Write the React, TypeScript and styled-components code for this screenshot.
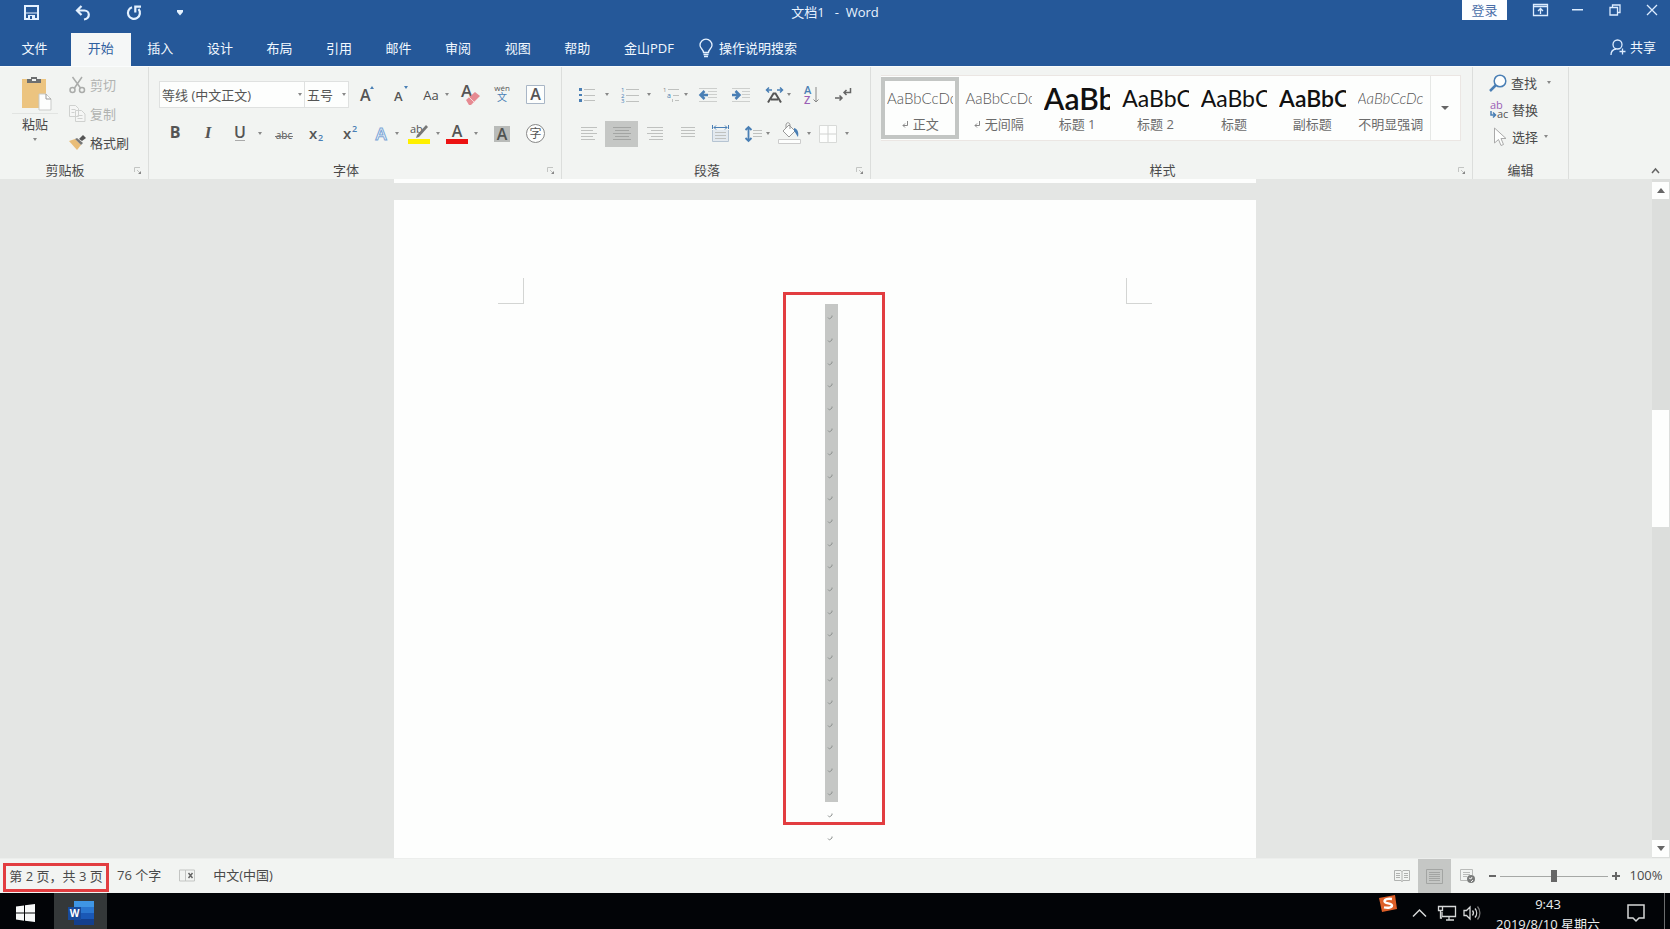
import React, { useState } from "react";
import styled, { createGlobalStyle, css } from "styled-components";

const Global = createGlobalStyle`
  * { box-sizing: border-box; }
  html, body, #root { height: 100%; }
  body {
    margin: 0;
    overflow: hidden;
    font-family: "Open Sans", "Noto Sans CJK SC", sans-serif;
    font-size: 13px;
    line-height: 20px;
    color: #4a4a4a;
  }
  button, input, select { font: inherit; color: inherit; }
  svg { overflow: visible; }
`;

const Bare = styled.button`
  border: 0;
  padding: 0;
  background: none;
  display: flex;
  align-items: center;
  justify-content: center;
  white-space: nowrap;
`;

const Window = styled.div`
  height: 100vh;
  display: flex;
  flex-direction: column;
  background: #e4e6e4;
`;

/* Title bar and tabs */

const TitleBar = styled.header`
  flex: none;
  height: 33px;
  display: grid;
  grid-template-columns: 1fr auto 1fr;
  background: #255899;
  color: #e9f3ff;
`;

const QuickAccess = styled.div`
  display: flex;
  align-items: center;
  height: 25px;
  padding-left: 6px;
`;

const QuickButton = styled(Bare)<{ $narrow?: boolean }>`
  width: ${(p) => (p.$narrow ? 42 : 51)}px;
  height: 25px;
`;

const DocTitle = styled.div`
  white-space: pre;
  line-height: 24px;
`;

const WindowControls = styled.div`
  display: flex;
  justify-content: flex-end;
  align-items: flex-start;
  height: 20px;
`;

const SignIn = styled(Bare)`
  width: 45px;
  height: 20px;
  margin-right: 15px;
  background: #fdfeff;
  color: #4a6ea8;
`;

const ControlButton = styled(Bare)`
  width: 37px;
  height: 20px;
`;

const TabBar = styled.nav`
  flex: none;
  height: 33px;
  display: flex;
  background: #255899;
  color: #f2f8ff;
`;

const FileTab = styled(Bare)`
  width: 71px;
  padding: 0 2px 3px 0;
`;

const Tabs = styled.div`
  width: 536px;
  display: grid;
  grid-template-columns: repeat(9, 1fr);
`;

const Tab = styled(Bare)<{ $active?: boolean }>`
  padding-bottom: 3px;
  ${(p) => p.$active && css`background: #f5f7f7; color: #2f5f9f;`}
`;

const PdfTab = styled(Bare)`
  width: 84px;
  padding-bottom: 3px;
`;

const TellMe = styled(Bare)`
  gap: 6px;
  margin-left: 8px;
  padding-bottom: 3px;
`;

const Share = styled(Bare)`
  gap: 4px;
  margin-left: auto;
  margin-right: 14px;
  height: 28px;
`;

/* Ribbon */

const Ribbon = styled.div`
  flex: none;
  height: 113px;
  display: flex;
  background: #f2f4f2;
  border-top: 1px solid #fafcfc;
`;

const Group = styled.section<{ $w?: number }>`
  ${(p) => (p.$w ? css`flex: none; width: ${p.$w}px;` : css`flex: 1; min-width: 0;`)}
  display: flex;
  flex-direction: column;
  border-right: 1px solid #dcdedc;
`;

const GroupBody = styled.div`
  flex: 1;
  min-height: 0;
  padding-left: 10px;
`;

const GroupFoot = styled.div`
  height: 18px;
  display: flex;
  align-items: center;
`;

const GroupLabel = styled.div`
  flex: 1;
  text-align: center;
  line-height: 18px;
`;

const Launcher = styled(Bare)`
  width: 8px;
  height: 8px;
  margin: 2px 6px 0 4px;
`;

const ToolRow = styled.div<{ $first?: boolean }>`
  display: flex;
  align-items: center;
  height: 27px;
  margin-top: ${(p) => (p.$first ? 14 : 12)}px;
`;

const Tool = styled(Bare)<{ $w: number; $gap?: number; $on?: boolean }>`
  flex: none;
  width: ${(p) => p.$w}px;
  height: 26px;
  gap: ${(p) => p.$gap ?? 4}px;
  ${(p) => p.$on && css`background: #c5c7c5;`}
`;

const ArrowGlyph = styled.svg`
  flex: none;
`;

const Arrow = () => (
  <ArrowGlyph width="4" height="3" viewBox="0 0 4 3"><path d="M0 0h4L2 3z" fill="#888" /></ArrowGlyph>
);

const Combo = styled.div<{ $w: number }>`
  width: ${(p) => p.$w}px;
  height: 27px;
  border: 1px solid #dfe1e0;
  background: #fdfefd;
  display: flex;
  align-items: center;
  padding-right: 2px;
  & + & { border-left: 0; }
`;

const ComboSelect = styled.select`
  appearance: none;
  flex: 1;
  min-width: 0;
  height: 25px;
  border: 0;
  padding: 0 0 0 2px;
  background: none;
  color: #555;
`;

/* Clipboard */

const Clipboard = styled.div`
  display: flex;
  height: 100%;
`;

const Paste = styled(Bare)`
  width: 50px;
  flex-direction: column;
  justify-content: flex-start;
  padding-top: 9px;
`;

const PasteRule = styled.div`
  width: 46px;
  height: 1px;
  margin-top: 3px;
  background: #e2e4e2;
`;

const PasteLabel = styled.span`
  margin-bottom: 4px;
`;

const ClipList = styled.div`
  display: flex;
  flex-direction: column;
  padding-top: 3px;
  margin-left: 9px;
`;

const ClipItem = styled(Bare)<{ $off?: boolean }>`
  height: 29px;
  gap: 4px;
  justify-content: flex-start;
  color: ${(p) => (p.$off ? "#b1b3b1" : "#4a4a4a")};
`;

/* Styles gallery */

const Gallery = styled.div`
  display: flex;
  height: 66px;
  margin: 8px 11px 0 0;
  background: #fdfefd;
  border: 1px solid #ebe6e3;
  border-left: 0;
`;

const StyleCard = styled(Bare)<{ $on?: boolean }>`
  flex: 1;
  min-width: 0;
  height: 62px;
  margin-top: 1px;
  flex-direction: column;
  justify-content: flex-start;
  padding: 4px 2px 0;
  border: 4px solid ${(p) => (p.$on ? "#c3c6c4" : "transparent")};
`;

const Preview = styled.span<{ $size: number; $weight: number; $soft?: boolean; $italic?: boolean }>`
  width: 100%;
  height: 26px;
  overflow: hidden;
  text-align: left;
  line-height: 26px;
  font-family: Lato, "Noto Sans CJK SC", sans-serif;
  font-size: ${(p) => p.$size}px;
  font-weight: ${(p) => p.$weight};
  font-style: ${(p) => (p.$italic ? "italic" : "normal")};
  color: ${(p) => (p.$soft ? "#555" : "#111")};
`;

const StyleName = styled.span`
  display: flex;
  align-items: center;
  gap: 4px;
  margin-top: 3px;
  line-height: 20px;
  color: #6c6c6c;
`;

const MoreStyles = styled(Bare)`
  width: 30px;
  border-left: 1px solid #e6e8e6;
`;

/* Editing */

const EditList = styled.div`
  display: flex;
  flex-direction: column;
  align-items: flex-start;
  padding: 2px 0 0 6px;
`;

const EditItem = styled(Bare)`
  height: 27px;
  gap: 4px;
`;

const EditText = styled.span<{ $wide?: boolean }>`
  margin-right: ${(p) => (p.$wide ? 6 : 2)}px;
`;

const RibbonEnd = styled.div`
  width: 101px;
  display: flex;
  align-items: flex-end;
  justify-content: flex-end;
  padding: 0 10px 5px 0;
`;

/* Document */

const Workspace = styled.div`
  flex: 1;
  min-height: 0;
  display: flex;
`;

const Canvas = styled.main`
  flex: 1;
  min-width: 0;
  overflow: hidden;
  display: flex;
  flex-direction: column;
  align-items: center;
`;

const PreviousPage = styled.div`
  flex: none;
  width: 862px;
  height: 4px;
  background: #fdfefd;
`;

const Page = styled.article`
  position: relative;
  flex: none;
  width: 862px;
  height: 1219px;
  margin-top: 17px;
  padding-top: 78px;
  background: #fdfefd;
`;

const Corners = styled.div`
  display: flex;
  justify-content: space-between;
  padding: 0 104px;
`;

const Corner = styled.div<{ $side: "left" | "right" }>`
  width: 26px;
  height: 26px;
  border-bottom: 1px solid #d3d5d3;
  ${(p) => (p.$side === "left" ? css`border-right: 1px solid #d3d5d3;` : css`border-left: 1px solid #d3d5d3;`)}
`;

const Lines = styled.div<{ $count: number; $height: number; $selected?: boolean }>`
  width: 13px;
  height: ${(p) => p.$height}px;
  margin-left: 50%;
  display: grid;
  grid-template-rows: repeat(${(p) => p.$count}, 1fr);
  padding-left: 3px;
  align-items: center;
  ${(p) => p.$selected && css`background: #c5c7c5;`}
`;

const Highlight = styled.div`
  position: absolute;
  top: 92px;
  left: calc(50% - 42px);
  width: 102px;
  height: 533px;
  border: 3px solid #e23d40;
`;

const ScrollBar = styled.aside`
  width: 18px;
  margin-left: 2px;
  padding: 3px 1px 1px 0;
  display: flex;
  flex-direction: column;
  background: #dcdedc;
`;

const ScrollButton = styled(Bare)`
  height: 17px;
  background: #fdfefd;
`;

const ScrollTrack = styled.div`
  flex: 1;
  display: flex;
  flex-direction: column;
`;

const ScrollSpace = styled.div<{ $share: number }>`
  flex: ${(p) => p.$share};
`;

const ScrollThumb = styled.div`
  height: 117px;
  background: #fdfefd;
`;

/* Status bar */

const StatusBar = styled.footer`
  flex: none;
  height: 35px;
  display: flex;
  align-items: center;
  background: #f2f4f2;
  border-top: 1px solid #eceeec;
`;

const PageCount = styled(Bare)`
  width: 106px;
  height: 29px;
  margin: 3px 8px 0 3px;
  padding-bottom: 4px;
  border: 3px solid #e23d40;
`;

const StatusItem = styled(Bare)`
  margin-right: 18px;
  padding-bottom: 2px;
`;

const ViewButton = styled(Bare)<{ $on?: boolean }>`
  width: 33px;
  height: 34px;
  ${(p) => p.$on && css`background: #c5c7c5;`}
`;

const StatusRight = styled.div`
  margin-left: auto;
  display: flex;
  align-items: center;
`;

const ViewGroup = styled.div`
  display: flex;
  margin-right: 4px;
`;

const ZoomStep = styled(Bare)`
  width: 8px;
  height: 20px;
`;

const ZoomRange = styled.input`
  appearance: none;
  width: 108px;
  height: 14px;
  margin: 0 4px;
  background: linear-gradient(#a6a8a6, #a6a8a6) center / 100% 1px no-repeat;
  &::-webkit-slider-thumb {
    appearance: none;
    width: 6px;
    height: 12px;
    background: #666;
  }
`;

const ZoomValue = styled(Bare)`
  width: 50px;
  padding: 0 0 2px 2px;
`;

/* Taskbar */

const Taskbar = styled.div`
  flex: none;
  height: 36px;
  overflow: hidden;
  display: flex;
  background: #020407;
  color: #eceeee;
`;

const TaskButton = styled(Bare)<{ $w: number; $on?: boolean }>`
  width: ${(p) => p.$w}px;
  height: 40px;
  ${(p) => p.$on && css`background: #343839;`}
`;

const StartButton = styled(TaskButton)`
  padding-right: 4px;
`;

const Tray = styled.div`
  margin-left: auto;
  display: flex;
  height: 40px;
`;

const Clock = styled.div`
  width: 120px;
  padding-top: 1px;
  text-align: center;
  line-height: 20px;
  white-space: nowrap;
`;

const TrayTop = styled(Bare)`
  width: 24px;
  height: 20px;
`;

const ShowDesktop = styled.div`
  width: 6px;
  border-left: 1px solid #6b6d6e;
`;

const A = "#555";
const B = "#4a7fb5";
const G = "#bfc1bf";

const LetterA = ({ size, up }: { size: number; up?: boolean }) => (
  <svg width="18" height="20" viewBox="0 0 18 20">
    <text x="2" y="16" fontSize={size} fontWeight="600" fill={A}>A</text>
    <path d={up ? "M12 4h4l-2-3z" : "M12 1h4l-2 3z"} fill={B} />
  </svg>
);

const Rows = ({ rows, w = 18, color = G }: { rows: [number, number][]; w?: number; color?: string }) => (
  <svg width={w} height="14" viewBox={`0 0 ${w} 14`}>
    {rows.map(([x, len], i) => <rect key={i} x={x} y={i * 3} width={len} height="1" fill={color} />)}
  </svg>
);

const Return = () => (
  <svg width="7" height="7" viewBox="0 0 7 7" fill="none" stroke="#888"><path d="M5.500 0v4.500H1M3 2.500l-2 2 2 2" /></svg>
);

const Mark = () => (
  <svg width="5" height="10" viewBox="0 0 5 10" fill="none" stroke="#8f9391"><path d="M4 5.500v1.500L1.500 9M0 7.500L1.500 9" /></svg>
);

const LaunchIcon = () => (
  <Launcher aria-label="更多选项">
    <svg width="8" height="8" viewBox="0 0 8 8" fill="none" stroke="#c3c5c3"><path d="M.5 5V.5H6" /><path d="M3 3l3 3" /><path d="M7 4v3H4z" fill="#888" stroke="none" /></svg>
  </Launcher>
);

const Foot = ({ label, launch }: { label: string; launch?: boolean }) => (
  <GroupFoot><GroupLabel>{label}</GroupLabel>{launch && <LaunchIcon />}</GroupFoot>
);

const tabs = ["开始", "插入", "设计", "布局", "引用", "邮件", "审阅", "视图", "帮助"];

const styles = [
  { name: "正文", text: "AaBbCcDc", size: 15, weight: 300, soft: true, mark: true },
  { name: "无间隔", text: "AaBbCcDc", size: 15, weight: 300, soft: true, mark: true },
  { name: "标题 1", text: "AaBb", size: 30, weight: 600 },
  { name: "标题 2", text: "AaBbC", size: 23, weight: 400 },
  { name: "标题", text: "AaBbC", size: 23, weight: 400 },
  { name: "副标题", text: "AaBbC", size: 23, weight: 600 },
  { name: "不明显强调", text: "AaBbCcDc", size: 15, weight: 300, soft: true, italic: true },
];

export default function App() {
  const [zoom, setZoom] = useState(50);
  return (
    <Window>
      <Global />
      <TitleBar>
        <QuickAccess>
          <QuickButton aria-label="保存">
            <svg width="15" height="15" viewBox="0 0 15 15"><path d="M1 1h13v13H1z" fill="none" stroke="#e4f1ff" strokeWidth="2" /><path d="M2 7.500h11v1H2z" fill="#e4f1ff" /><path d="M4 10h7v4H4z" fill="#e4f1ff" /><path d="M6 11h2v3H6z" fill="#255899" /></svg>
          </QuickButton>
          <QuickButton aria-label="撤消">
            <svg width="16" height="16" viewBox="0 0 16 16" fill="none" stroke="#e4f1ff" strokeWidth="2.200"><path d="M6.500 1L2 5.500 6.500 10M2 5.500h7.500a4.300 4.300 0 014.300 4.300c0 2.500-1.800 4.200-4.800 4.700" /></svg>
          </QuickButton>
          <QuickButton aria-label="重复">
            <svg width="16" height="16" viewBox="0 0 16 16" fill="none" stroke="#e4f1ff" strokeWidth="2.200"><path d="M6 2.200A6 6 0 1012.500 4M15 1.600H9.300V7.500" /></svg>
          </QuickButton>
          <QuickButton $narrow aria-label="自定义快速访问工具栏">
            <svg width="6" height="6" viewBox="0 0 6 6" fill="#e4f1ff"><path d="M0 0h6v2L3 5.500 0 2z" /></svg>
          </QuickButton>
        </QuickAccess>
        <DocTitle>{"文档1   -  Word"}</DocTitle>
        <WindowControls>
          <SignIn>登录</SignIn>
          <ControlButton aria-label="功能区显示选项">
            <svg width="15" height="12" viewBox="0 0 15 12" fill="none" stroke="#dcecff"><path d="M.5.5h14v11H.5zM.5 2.500h14M7.500 10V5M5 7l2.500-2.500L10 7" strokeWidth="1.300" /></svg>
          </ControlButton>
          <ControlButton aria-label="最小化">
            <svg width="11" height="2" viewBox="0 0 11 2"><path d="M0 0h11v1.500H0z" fill="#dcecff" /></svg>
          </ControlButton>
          <ControlButton aria-label="还原">
            <svg width="12" height="12" viewBox="0 0 12 12" fill="none" stroke="#dcecff" strokeWidth="1.300"><path d="M1 3.500h7.500V11H1zM3.500 3.500V1H11v7.500H8.500" /></svg>
          </ControlButton>
          <ControlButton aria-label="关闭">
            <svg width="12" height="12" viewBox="0 0 12 12" stroke="#dcecff" strokeWidth="1.300"><path d="M1 1l10 10M11 1L1 11" /></svg>
          </ControlButton>
        </WindowControls>
      </TitleBar>
      <TabBar>
        <FileTab>文件</FileTab>
        <Tabs>{tabs.map((t, i) => <Tab key={t} $active={i === 0}>{t}</Tab>)}</Tabs>
        <PdfTab>金山PDF</PdfTab>
        <TellMe>
          <svg width="14" height="19" viewBox="0 0 14 19" fill="none" stroke="#e4f1ff" strokeWidth="1.300"><path d="M4.500 13.500c0-3-3.500-4-3.500-7.300a6 6 0 0112 0c0 3.300-3.500 4.300-3.500 7.300zM4.500 15.500h5M5 17.500h4" /></svg>
          操作说明搜索
        </TellMe>
        <Share>
          <svg width="16" height="17" viewBox="0 0 16 17" fill="none" stroke="#dcecff" strokeWidth="1.300"><circle cx="7.500" cy="5.500" r="4.500" /><path d="M1 16c0-3.500 2-5.500 5-6M12.500 9.500v6M9.500 12.500h6" /></svg>
          共享
        </Share>
      </TabBar>
      <Ribbon>
        <Group $w={149}>
          <GroupBody>
            <Clipboard>
              <Paste>
                <svg width="28" height="34" viewBox="2 0 28 34"><rect x="3" y="3" width="24" height="29" fill="#ecc480" /><path d="M8 3h4V1h6v2h4v4H8z" fill="#6d6f70" /><path d="M13 3h4v2h-4z" fill="#f2f4f2" /><path d="M20 18h7l5 5v11H20z" fill="#fdfefd" stroke="#c9cbc9" /><path d="M27 18v5h5" fill="none" stroke="#999" /></svg>
                <PasteRule />
                <PasteLabel>粘贴</PasteLabel>
                <Arrow />
              </Paste>
              <ClipList>
                <ClipItem $off>
                  <svg width="17" height="18" viewBox="0 0 17 18" fill="none" stroke="#aaacaa" strokeWidth="1.500"><path d="M3.500 1l8 11M13 1L5.500 12" /><circle cx="3.500" cy="14" r="2.500" /><circle cx="13" cy="14" r="2.500" /></svg>
                  剪切
                </ClipItem>
                <ClipItem $off>
                  <svg width="17" height="17" viewBox="0 0 17 17" fill="#f5f6f5" stroke="#cfd1cf"><path d="M.5.5h6l3 3v8h-9zM6.500 5.500h6l3.500 3.500v7.500H6.500zM2.500 4.500h4M2.500 7.500h3M8.500 10.500h5M8.500 13.500h5" /></svg>
                  复制
                </ClipItem>
                <ClipItem>
                  <svg width="17" height="15" viewBox="0 0 17 15"><path d="M0 6l6-2 6 6-4 5z" fill="#e9bd78" /><path d="M6 4l2-1 6 5-2 2z" fill="#777" /><path d="M10 4l4-4 3 3-4 3z" fill="#555" /></svg>
                  格式刷
                </ClipItem>
              </ClipList>
            </Clipboard>
          </GroupBody>
          <Foot label="剪贴板" launch />
        </Group>

        <Group $w={413}>
          <GroupBody>
            <ToolRow $first>
              <Combo $w={146}>
                <ComboSelect aria-label="字体"><option>等线 (中文正文)</option></ComboSelect>
                <Arrow />
              </Combo>
              <Combo $w={44}>
                <ComboSelect aria-label="字号"><option>五号</option></ComboSelect>
                <Arrow />
              </Combo>
              <Tool $w={36} aria-label="增大字号"><LetterA size={16} up /></Tool>
              <Tool $w={32} aria-label="减小字号"><LetterA size={13} /></Tool>
              <Tool $w={38} $gap={6} aria-label="更改大小写">Aa<Arrow /></Tool>
              <Tool $w={30} aria-label="清除所有格式">
                <svg width="19" height="20" viewBox="0 0 19 20"><text x="0" y="12" fontSize="17" fontWeight="600" fill={A}>A</text><path d="M5 15l9-8 5 4-9 9H8z" fill="#e68a92" /><path d="M8 12l5 5" stroke="#f6d5d8" /></svg>
              </Tool>
              <Tool $w={34} aria-label="拼音指南">
                <svg width="16" height="19" viewBox="0 0 16 19"><text x="8" y="6" fontSize="8" textAnchor="middle" fill={A}>wén</text><text x="8" y="16" fontSize="10" textAnchor="middle" fill={B}>文</text></svg>
              </Tool>
              <Tool $w={32} aria-label="字符边框">
                <svg width="19" height="19" viewBox="0 0 19 19"><path d="M.5.5h18v18H.5z" fill="#fdfefd" stroke="#a9b6c6" /><text x="9.500" y="15" fontSize="16" fontWeight="600" textAnchor="middle" fill={A}>A</text></svg>
              </Tool>
            </ToolRow>
            <ToolRow>
              <Tool $w={32} aria-label="加粗"><svg width="12" height="18" viewBox="0 0 12 18"><text x="6" y="13" fontSize="16" fontWeight="700" textAnchor="middle" fill={A}>B</text></svg></Tool>
              <Tool $w={34} aria-label="倾斜"><svg width="12" height="18" viewBox="0 0 12 18"><text x="6" y="13" fontSize="17" fontWeight="700" fontStyle="italic" fontFamily="Liberation Serif, serif" textAnchor="middle" fill={A}>I</text></svg></Tool>
              <Tool $w={46} $gap={12} aria-label="下划线"><svg width="12" height="18" viewBox="0 0 12 18"><text x="6" y="13" fontSize="16" fontWeight="600" textAnchor="middle" fill={A}>U</text><path d="M1 15.500h10" stroke="#aaa" /></svg><Arrow /></Tool>
              <Tool $w={26} aria-label="删除线"><svg width="18" height="18" viewBox="0 0 18 18"><text x="9" y="14" fontSize="10" textAnchor="middle" fill={A}>abc</text><path d="M0 11.500h18" stroke="#777" /></svg></Tool>
              <Tool $w={40} aria-label="下标"><svg width="16" height="18" viewBox="0 0 16 18"><text x="0" y="14" fontSize="15" fontWeight="600" fill={A}>x</text><text x="9" y="16" fontSize="9" fontWeight="600" fill={B}>2</text></svg></Tool>
              <Tool $w={28} aria-label="上标"><svg width="16" height="18" viewBox="0 0 16 18"><text x="0" y="14" fontSize="15" fontWeight="600" fill={A}>x</text><text x="9" y="7" fontSize="9" fontWeight="600" fill={B}>2</text></svg></Tool>
              <Tool $w={44} $gap={8} aria-label="文本效果"><svg width="12" height="18" viewBox="0 0 12 18"><text x="6" y="15" fontSize="17" fontWeight="600" textAnchor="middle" fill="#fdfefd" stroke="#7ba5d6">A</text></svg><Arrow /></Tool>
              <Tool $w={30} $gap={6} aria-label="突出显示颜色"><svg width="22" height="22" viewBox="0 0 22 22"><text x="2" y="10" fontSize="11" fill={A}>ab</text><path d="M18 2l-9 10-1 3 3-1 9-10z" fill="#777" /><path d="M0 16h22v5H0z" fill="#fff000" /></svg><Arrow /></Tool>
              <Tool $w={46} $gap={6} aria-label="字体颜色"><svg width="22" height="22" viewBox="0 0 22 22"><text x="11" y="14" fontSize="16" fontWeight="600" textAnchor="middle" fill={A}>A</text><path d="M0 16h22v5H0z" fill="#ec1212" /></svg><Arrow /></Tool>
              <Tool $w={34} aria-label="字符底纹"><svg width="16" height="18" viewBox="0 0 16 18"><path d="M0 1h16v16H0z" fill="#b9bbb9" /><text x="8" y="15" fontSize="16" fontWeight="600" textAnchor="middle" fill="#505250">A</text></svg></Tool>
              <Tool $w={32} aria-label="带圈字符"><svg width="19" height="19" viewBox="0 0 19 19"><circle cx="9.500" cy="9.500" r="9" fill="#fdfefd" stroke="#888" /><text x="9.500" y="14" fontSize="12" textAnchor="middle" fill={A}>字</text></svg></Tool>
            </ToolRow>
          </GroupBody>
          <Foot label="字体" launch />
        </Group>

        <Group $w={309}>
          <GroupBody>
            <ToolRow $first>
              <Tool $w={44} $gap={10} aria-label="项目符号"><svg width="16" height="14" viewBox="0 0 16 14"><path d="M0 0h3v3H0zM0 6h3v2H0zM0 11h3v3H0z" fill={B} /><path d="M5 1.500h11M5 7.500h11M5 12.500h11" stroke={G} /></svg><Arrow /></Tool>
              <Tool $w={40} $gap={8} aria-label="编号"><svg width="18" height="16" viewBox="0 0 18 16"><text y="5" fontSize="6" fill={B}>1</text><text y="11" fontSize="6" fill={B}>2</text><text y="16" fontSize="6" fill={B}>3</text><path d="M5 2.500h13M5 8.500h13M5 14.500h13" stroke={G} /></svg><Arrow /></Tool>
              <Tool $w={38} aria-label="多级列表"><svg width="17" height="16" viewBox="0 0 17 16"><text y="5" fontSize="6" fill="#888">1</text><text x="4" y="11" fontSize="7" fill={B}>a</text><path d="M5 2.500h11M10 8.500h6" stroke={G} /><path d="M9.500 12v3M12 13.500h4" stroke={G} fill="none" /></svg><Arrow /></Tool>
              <Tool $w={28} aria-label="减少缩进量"><svg width="18" height="16" viewBox="0 0 18 16"><path d="M0 1.500h18M9 4.500h9M9 7.500h9M9 10.500h9M0 14.500h18" stroke="#cdcfcd" /><path d="M9 8H2M5.500 4L1.500 8l4 4" stroke={B} strokeWidth="2.500" fill="none" /></svg></Tool>
              <Tool $w={38} aria-label="增加缩进量"><svg width="18" height="16" viewBox="0 0 18 16"><path d="M0 1.500h18M10 4.500h8M10 7.500h8M10 10.500h8M0 14.500h18" stroke="#cdcfcd" /><path d="M0 8h7M3.500 4l4 4-4 4" stroke={B} strokeWidth="2.500" fill="none" /></svg></Tool>
              <Tool $w={36} aria-label="中文版式"><svg width="17" height="16" viewBox="0 0 17 16" fill="none"><path d="M2 15.500l5.500-9h2l5.500 9M5 12.500h7" stroke={A} strokeWidth="2" /><path d="M0 3h6M11 3h6M3 .5L.5 3 3 5.500M14 .5L16.500 3 14 5.500" stroke={B} strokeWidth="1.500" /></svg><Arrow /></Tool>
              <Tool $w={30} aria-label="排序"><svg width="15" height="19" viewBox="0 0 15 19"><text x="0" y="9" fontSize="11" fontWeight="600" fill={B}>A</text><text x="0" y="19" fontSize="11" fontWeight="600" fill="#9a5fb5">Z</text><path d="M12 2v15M9.500 14.500L12 17l2.500-2.500" stroke="#888" fill="none" /></svg></Tool>
              <Tool $w={34} aria-label="显示编辑标记"><svg width="17" height="15" viewBox="0 0 17 15" fill="none" stroke="#666" strokeWidth="1.500"><path d="M15.500 1v4.500H9M11.500 3L9 5.500 11.500 8M0 11h7M4.500 8.500L7 11l-2.500 2.500" /></svg></Tool>
            </ToolRow>
            <ToolRow>
              <Tool $w={33} aria-label="左对齐"><Rows rows={[[1, 16], [1, 12], [1, 16], [1, 12], [1, 14]]} /></Tool>
              <Tool $w={33} $on aria-label="居中"><Rows color="#a3a5a3" rows={[[0, 18], [2, 14], [0, 18], [2, 14], [0, 18]]} /></Tool>
              <Tool $w={33} aria-label="右对齐"><Rows rows={[[1, 16], [5, 12], [1, 16], [5, 12], [3, 14]]} /></Tool>
              <Tool $w={33} aria-label="两端对齐"><Rows w={14} rows={[[0, 14], [0, 14], [0, 14], [0, 14]]} /></Tool>
              <Tool $w={33} aria-label="分散对齐"><svg width="17" height="17" viewBox="0 0 17 17"><path d="M.5 5v11.500h16V5" fill="#e3e9ef" stroke="#b6c4d2" /><path d="M.5 0v4M16.500 0v4M2 2.500h13M4 .5l-2 2 2 2M13 .5l2 2-2 2" stroke={B} fill="none" /><path d="M3 7.500h11M3 10.500h11M3 13.500h11" stroke={G} /></svg></Tool>
              <Tool $w={40} aria-label="行距"><svg width="17" height="16" viewBox="0 0 17 16" fill="none"><path d="M3.500 1v14M.5 4l3-3 3 3M.5 12l3 3 3-3" stroke={B} strokeWidth="1.800" /><path d="M8 4.500h9M8 7.500h9M8 10.500h9" stroke={G} /></svg><Arrow /></Tool>
              <Tool $w={34} $gap={6} aria-label="底纹"><svg width="23" height="21" viewBox="0 0 23 21"><path d="M5 8l6-6 6 6-6 6z" fill="#fdfefd" stroke="#999" /><path d="M8 5V2c0-3 4-3 4 0v4" stroke="#999" fill="none" /><path d="M16 5c4 1 5 5 4 9-1-1-2-4-4-6z" fill={B} /><path d="M.5 16.500h22v4H.5z" fill="#fdfefd" stroke="#ccc" /></svg><Arrow /></Tool>
              <Tool $w={46} $gap={8} aria-label="边框"><svg width="18" height="18" viewBox="0 0 18 18"><path d="M.5.5h17v17H.5z" fill="#fdfefd" stroke="#d8dad8" /><path d="M9 1v16M1 9h16" stroke="#d0d2d0" /></svg><Arrow /></Tool>
            </ToolRow>
          </GroupBody>
          <Foot label="段落" launch />
        </Group>

        <Group>
          <GroupBody>
            <Gallery>
              {styles.map((s, i) => (
                <StyleCard key={s.name} $on={i === 0}>
                  <Preview $size={s.size} $weight={s.weight} $soft={s.soft} $italic={s.italic}>{s.text}</Preview>
                  <StyleName>{s.mark && <Return />}{s.name}</StyleName>
                </StyleCard>
              ))}
              <MoreStyles aria-label="其他样式"><svg width="8" height="4" viewBox="0 0 8 4"><path d="M0 0h8L4 4z" fill="#666" /></svg></MoreStyles>
            </Gallery>
          </GroupBody>
          <Foot label="样式" launch />
        </Group>

        <Group $w={96}>
          <GroupBody>
            <EditList>
              <EditItem>
                <svg width="18" height="18" viewBox="0 0 18 18" fill="none" stroke="#4a7fb5"><circle cx="11" cy="7" r="5.800" fill="#fdfefd" strokeWidth="1.500" /><path d="M7 11l-6 6" strokeWidth="2.500" /></svg>
                <EditText $wide>查找</EditText><Arrow />
              </EditItem>
              <EditItem>
                <svg width="19" height="18" viewBox="0 0 19 18"><text x="1" y="8" fontSize="11" fill="#9a5fb5">ab</text><text x="8" y="17" fontSize="11" fill={A}>ac</text><path d="M2 10v4h5M4 11.500L6.500 14 4 16.500" stroke={B} strokeWidth="1.500" fill="none" /></svg>
                <EditText>替换</EditText>
              </EditItem>
              <EditItem>
                <svg width="19" height="20" viewBox="0 0 19 20"><path d="M5.500 1v15l4-3.500 2.500 6 2.500-1-2.500-6h5z" fill="#fdfefd" stroke="#aaa" /></svg>
                <EditText>选择</EditText><Arrow />
              </EditItem>
            </EditList>
          </GroupBody>
          <Foot label="编辑" />
        </Group>
        <RibbonEnd>
          <Bare aria-label="折叠功能区"><svg width="9" height="6" viewBox="0 0 9 6" fill="none" stroke="#666" strokeWidth="1.500"><path d="M1 5l3.500-4L8 5" /></svg></Bare>
        </RibbonEnd>
      </Ribbon>

      <Workspace>
        <Canvas>
          <PreviousPage />
          <Page>
            <Corners><Corner $side="left" /><Corner $side="right" /></Corners>
            <Lines $count={22} $height={498} $selected>{Array.from({ length: 22 }, (_, i) => <Mark key={i} />)}</Lines>
            <Lines $count={2} $height={45}><Mark /><Mark /></Lines>
            <Highlight />
          </Page>
        </Canvas>
        <ScrollBar>
          <ScrollButton aria-label="向上滚动"><svg width="8" height="5" viewBox="0 0 8 5"><path d="M0 5h8L4 0z" fill="#666" /></svg></ScrollButton>
          <ScrollTrack>
            <ScrollSpace $share={211} />
            <ScrollThumb />
            <ScrollSpace $share={313} />
          </ScrollTrack>
          <ScrollButton aria-label="向下滚动"><svg width="8" height="5" viewBox="0 0 8 5"><path d="M0 0h8L4 5z" fill="#666" /></svg></ScrollButton>
        </ScrollBar>
      </Workspace>

      <StatusBar>
        <PageCount>第 2 页，共 3 页</PageCount>
        <StatusItem>76 个字</StatusItem>
        <StatusItem aria-label="校对">
          <svg width="16" height="13" viewBox="0 0 16 13" fill="none" stroke="#c3c5c3"><path d="M.5 1v11h6V1zM6.500 1h9v11h-9" /><path d="M9.500 4l4 5M13.500 4l-4 5" stroke="#666" strokeWidth="1.500" /></svg>
        </StatusItem>
        <StatusItem>中文(中国)</StatusItem>
        <StatusRight>
          <ViewGroup>
            <ViewButton aria-label="阅读视图"><svg width="16" height="14" viewBox="0 0 16 14" fill="none" stroke="#b0b2b0"><path d="M8 2.500L7 1.500H.5v10H7l1 1 1-1h6.500v-10H9zM8 2v11M2 4.500h4M2 6.500h4M2 8.500h4M10 4.500h4M10 6.500h4M10 8.500h4" /></svg></ViewButton>
            <ViewButton $on aria-label="页面视图"><svg width="17" height="15" viewBox="0 0 17 15" fill="none" stroke="#a3a5a3"><path d="M.5.5h16v14H.5zM3 3.500h11M3 5.500h11M3 7.500h11M3 9.500h11M3 11.500h11" /></svg></ViewButton>
            <ViewButton aria-label="Web 版式视图"><svg width="16" height="15" viewBox="0 0 16 15" fill="none" stroke="#b9bbb9"><path d="M12.500 6V.5H.5v11H7M3 3.500h7M3 5.500h7M3 7.500h4" /><circle cx="11" cy="10" r="4" fill="#7a7c7b" stroke="none" /><path d="M9 9l2 1 1-2M11 13l2-2" stroke="#eee" /></svg></ViewButton>
          </ViewGroup>
          <ZoomStep aria-label="缩小"><svg width="7" height="2" viewBox="0 0 7 2"><path d="M0 0h7v2H0z" fill="#666" /></svg></ZoomStep>
          <ZoomRange type="range" aria-label="显示比例" value={zoom} onChange={(e) => setZoom(Number(e.target.value))} />
          <ZoomStep aria-label="放大"><svg width="8" height="8" viewBox="0 0 8 8"><path d="M3 0h2v3h3v2H5v3H3V5H0V3h3z" fill="#666" /></svg></ZoomStep>
          <ZoomValue>100%</ZoomValue>
        </StatusRight>
      </StatusBar>

      <Taskbar>
        <StartButton $w={54} aria-label="开始菜单">
          <svg width="19" height="18" viewBox="0 0 19 18" fill="#f6f8f8"><path d="M0 2.500L8 1.400V8.600H0zM9 1.200L19 0v8.600H9zM0 9.500h8v7.200L0 15.600zM9 9.500h10V18L9 16.800z" /></svg>
        </StartButton>
        <TaskButton $w={53} $on aria-label="Word">
          <svg width="26" height="24" viewBox="0 0 26 24"><path d="M6 0h20v6H6z" fill="#3f96e4" /><path d="M6 6h20v6H6z" fill="#2a76cf" /><path d="M6 12h20v6H6z" fill="#1a58b6" /><path d="M6 18h20v6H6z" fill="#133f8d" /><path d="M0 6h13v13H0z" fill="#174a9a" /><text x="6.500" y="16" fontSize="10" fontWeight="700" textAnchor="middle" fill="#fff">W</text></svg>
        </TaskButton>
        <Tray>
          <TrayTop aria-label="输入法">
            <svg width="18" height="17" viewBox="0 0 18 17"><path d="M0 3l16-3 2 14-15 3z" fill="#dd5f28" /><path d="M13 4C9 3.500 5.500 4 5.500 6.200c0 2.600 7.500 1.600 7.500 4.300 0 2.200-4 2.700-8 1.800" fill="none" stroke="#fff" strokeWidth="2.400" /></svg>
          </TrayTop>
          <TaskButton $w={38} aria-label="显示隐藏的图标"><svg width="15" height="8" viewBox="0 0 15 8" fill="none" stroke="#d6d8d8" strokeWidth="1.500"><path d="M1 7.500l6.500-6.500 6.500 6.500" /></svg></TaskButton>
          <TaskButton $w={18} aria-label="网络"><svg width="18" height="16" viewBox="0 0 18 16" fill="none" stroke="#d6d8d8" strokeWidth="1.300"><path d="M5 1.500h12.500v10H4V7M8 15h8M11 12v3" /><path d="M.5 1.500h4v4h-4zM2.500 5.500V13H4" /></svg></TaskButton>
          <TaskButton $w={32} aria-label="音量"><svg width="18" height="16" viewBox="0 0 18 16" fill="none" stroke="#d6d8d8" strokeWidth="1.300"><path d="M1 5.500h2.500L7 2v12l-3.500-3.500H1zM9.500 5.500a4 4 0 010 5M12 3.500a7 7 0 010 9" /><path d="M14.500 1.500a10 10 0 010 13" stroke="#777" /></svg></TaskButton>
          <Clock>9:43<br />2019/8/10 星期六</Clock>
          <TaskButton $w={56} aria-label="通知"><svg width="18" height="18" viewBox="0 0 18 18" fill="none" stroke="#d6d8d8" strokeWidth="1.500"><path d="M1 1h16v13h-5l-3 3-3-3H1z" /></svg></TaskButton>
          <ShowDesktop />
        </Tray>
      </Taskbar>
    </Window>
  );
}
